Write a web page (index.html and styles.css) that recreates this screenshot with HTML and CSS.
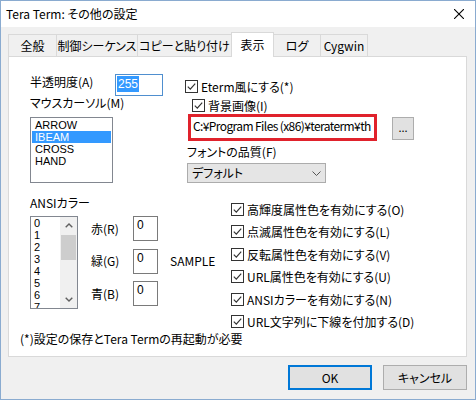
FILE: index.html
```html
<!DOCTYPE html>
<html lang="ja">
<head>
<meta charset="utf-8">
<title>Tera Term: その他の設定</title>
<link rel="stylesheet" href="styles.css">
</head>
<body>
<div class="window">
  <div class="titlebar">
    <span class="title">Tera Term: その他の設定</span>
    <svg class="close" width="10" height="10" viewBox="0 0 10 10"><path d="M0 0L10 10M10 0L0 10" stroke="#000" stroke-width="1.1" fill="none"/></svg>
  </div>
  <div class="body">
    <div class="tabs">
      <div class="tab t1">全般</div>
      <div class="tab t2">制御シーケンス</div>
      <div class="tab t3">コピーと貼り付け</div>
      <div class="tab t4 active">表示</div>
      <div class="tab t5">ログ</div>
      <div class="tab t6">Cygwin</div>
    </div>
    <div class="panel">
      <div class="sec-top">
        <div class="col-left">
          <div class="row-alpha">
            <span class="lbl-alpha">半透明度(A)</span>
            <div class="edit edit-alpha"><span class="sel">255</span></div>
          </div>
          <div class="lbl">マウスカーソル(M)</div>
          <div class="listbox cursor-list">
            <div class="item">ARROW</div>
            <div class="item selected">IBEAM</div>
            <div class="item">CROSS</div>
            <div class="item">HAND</div>
          </div>
        </div>
        <div class="col-right">
          <div class="check eterm">
            <svg class="cb" width="13" height="13" viewBox="0 0 13 13"><rect x="0.5" y="0.5" width="12" height="12" fill="#fff" stroke="#333"/><path d="M2.8 6.6L5.3 9.1L10.2 3.6" fill="none" stroke="#333" stroke-width="1.2"/></svg>
            <span>Eterm風にする(*)</span>
          </div>
          <div class="check bgimg">
            <svg class="cb" width="13" height="13" viewBox="0 0 13 13"><rect x="0.5" y="0.5" width="12" height="12" fill="#fff" stroke="#333"/><path d="M2.8 6.6L5.3 9.1L10.2 3.6" fill="none" stroke="#333" stroke-width="1.2"/></svg>
            <span>背景画像(I)</span>
          </div>
          <div class="path-row">
            <div class="pathbox"><span class="pathtext">C:¥Program Files (x86)¥teraterm¥th</span></div>
            <div class="btn-dots">...</div>
          </div>
          <div class="lbl font-lbl">フォントの品質(F)</div>
          <div class="combo">
            <span>デフォルト</span>
            <svg width="9" height="5" viewBox="0 0 9 5"><path d="M0.5 0.5L4.5 4.5L8.5 0.5" fill="none" stroke="#555" stroke-width="1"/></svg>
          </div>
        </div>
      </div>
      <div class="sec-bottom">
        <div class="ansi">
          <div class="lbl">ANSIカラー</div>
          <div class="listbox ansi-list">
            <div class="nums">
              <div>0</div><div>1</div><div>2</div><div>3</div><div>4</div><div>5</div><div>6</div><div class="last">7</div>
            </div>
            <div class="vscroll">
              <div class="arrow">
                <svg width="8" height="5" viewBox="0 0 8 5"><path d="M0.7 4.3L4 1L7.3 4.3" fill="none" stroke="#606060" stroke-width="1.4"/></svg>
              </div>
              <div class="thumb"></div>
              <div class="track"></div>
              <div class="arrow">
                <svg width="8" height="5" viewBox="0 0 8 5"><path d="M0.7 0.7L4 4L7.3 0.7" fill="none" stroke="#606060" stroke-width="1.4"/></svg>
              </div>
            </div>
          </div>
        </div>
        <div class="rgb">
          <div class="rgb-row"><span class="rgb-lbl">赤(R)</span><div class="edit edit-num">0</div></div>
          <div class="rgb-row"><span class="rgb-lbl">緑(G)</span><div class="edit edit-num">0</div><span class="sample">SAMPLE</span></div>
          <div class="rgb-row"><span class="rgb-lbl">青(B)</span><div class="edit edit-num">0</div></div>
        </div>
        <div class="checks">
          <div class="check crow">
            <svg class="cb" width="13" height="13" viewBox="0 0 13 13"><rect x="0.5" y="0.5" width="12" height="12" fill="#fff" stroke="#333"/><path d="M2.8 6.6L5.3 9.1L10.2 3.6" fill="none" stroke="#333" stroke-width="1.2"/></svg>
            <span>高輝度属性色を有効にする(O)</span>
          </div>
          <div class="check crow">
            <svg class="cb" width="13" height="13" viewBox="0 0 13 13"><rect x="0.5" y="0.5" width="12" height="12" fill="#fff" stroke="#333"/><path d="M2.8 6.6L5.3 9.1L10.2 3.6" fill="none" stroke="#333" stroke-width="1.2"/></svg>
            <span>点滅属性色を有効にする(L)</span>
          </div>
          <div class="check crow">
            <svg class="cb" width="13" height="13" viewBox="0 0 13 13"><rect x="0.5" y="0.5" width="12" height="12" fill="#fff" stroke="#333"/><path d="M2.8 6.6L5.3 9.1L10.2 3.6" fill="none" stroke="#333" stroke-width="1.2"/></svg>
            <span>反転属性色を有効にする(V)</span>
          </div>
          <div class="check crow">
            <svg class="cb" width="13" height="13" viewBox="0 0 13 13"><rect x="0.5" y="0.5" width="12" height="12" fill="#fff" stroke="#333"/><path d="M2.8 6.6L5.3 9.1L10.2 3.6" fill="none" stroke="#333" stroke-width="1.2"/></svg>
            <span>URL属性色を有効にする(U)</span>
          </div>
          <div class="check crow">
            <svg class="cb" width="13" height="13" viewBox="0 0 13 13"><rect x="0.5" y="0.5" width="12" height="12" fill="#fff" stroke="#333"/><path d="M2.8 6.6L5.3 9.1L10.2 3.6" fill="none" stroke="#333" stroke-width="1.2"/></svg>
            <span>ANSIカラーを有効にする(N)</span>
          </div>
          <div class="check crow">
            <svg class="cb" width="13" height="13" viewBox="0 0 13 13"><rect x="0.5" y="0.5" width="12" height="12" fill="#fff" stroke="#333"/><path d="M2.8 6.6L5.3 9.1L10.2 3.6" fill="none" stroke="#333" stroke-width="1.2"/></svg>
            <span>URL文字列に下線を付加する(D)</span>
          </div>
        </div>
      </div>
      <div class="note">(*)設定の保存とTera Termの再起動が必要</div>
    </div>
    <div class="buttons">
      <div class="btn default">OK</div>
      <div class="btn">キャンセル</div>
    </div>
  </div>
</div>
</body>
</html>
```

FILE: styles.css
```css
html, body {
  margin: 0;
  padding: 0;
  background: #ffffff;
}
body {
  font-family: "Noto Sans CJK JP", "Noto Sans", sans-serif;
  font-size: 12px;
  color: #000;
  font-feature-settings: "palt";
}
.window {
  width: 476px;
  height: 400px;
  box-sizing: border-box;
  border: 1px solid #8aabd0;
  background: #f0f0f0;
  display: flex;
  flex-direction: column;
  overflow: hidden;
}
.titlebar {
  height: 26px;
  flex: none;
  background: #fff;
  display: flex;
  align-items: center;
  justify-content: space-between;
  padding: 0 11px 0 5px;
}
.title {
  line-height: 16px;
  font-size: 12px;
}
.body {
  flex: 1;
  display: flex;
  flex-direction: column;
}
.tabs {
  display: flex;
  align-items: flex-end;
  height: 22px;
  margin: 7px 0 0 7px;
}
.tab {
  height: 22px;
  box-sizing: border-box;
  border: 1px solid #d9d9d9;
  border-bottom: none;
  margin-right: -1px;
  display: flex;
  align-items: center;
  justify-content: center;
  line-height: 14px;
  white-space: nowrap;
}
.t1 { width: 49px; }
.t2 { width: 82px; }
.t3 { width: 95px; }
.t4 { width: 43px; }
.t5 { width: 48px; }
.t6 { width: 48px; }
.tab.active {
  height: 25px;
  margin-bottom: -1px;
  background: #fff;
  position: relative;
  z-index: 1;
  padding-bottom: 1px;
}
.panel {
  margin-left: 7px;
  width: 459px;
  height: 301px;
  box-sizing: border-box;
  border: 1px solid #d9d9d9;
  background: #fff;
}
.sec-top {
  display: flex;
  height: 133px;
}
.col-left {
  margin-left: 21px;
  width: 155px;
  flex: none;
}
.row-alpha {
  display: flex;
  margin-top: 17px;
  height: 22px;
}
.lbl-alpha {
  width: 85px;
  line-height: 16px;
}
.edit {
  box-sizing: border-box;
  background: #fff;
  font-family: "Liberation Sans", sans-serif;
  font-size: 12px;
}
.edit-alpha {
  width: 48px;
  height: 22px;
  border: 1px solid #4f8fcf;
  padding: 1px 0 0 1px;
}
.sel {
  display: inline-block;
  background: #3399ff;
  color: #fff;
  line-height: 16px;
  padding: 0 1px;
}
.lbl {
  line-height: 14px;
  white-space: nowrap;
}
.listbox {
  box-sizing: border-box;
  border: 1px solid #828790;
  background: #fff;
}
.cursor-list {
  margin-top: 7px;
  width: 83px;
  height: 66px;
  padding: 1px;
  font-family: "Liberation Sans", sans-serif;
  font-size: 11px;
}
.item {
  line-height: 12px;
  padding-left: 3px;
}
.item.selected {
  background: #3399ff;
  color: #fff;
}
.col-right {
  flex: none;
}
.check {
  display: flex;
  align-items: center;
  gap: 3px;
  white-space: nowrap;
}
.cb {
  flex: none;
}
.eterm {
  margin-top: 21px;
  height: 16px;
}
.bgimg {
  margin-top: 3px;
  margin-left: 7px;
  height: 16px;
}
.path-row {
  display: flex;
  margin-top: 1px;
  margin-left: 3px;
}
.pathbox {
  width: 189px;
  height: 27px;
  box-sizing: border-box;
  border: 3px solid #e0222c;
  padding-left: 2px;
  line-height: 17px;
  white-space: nowrap;
  overflow: hidden;
}
.pathtext {
  letter-spacing: -0.6px;
}
.btn-dots {
  margin-left: 15px;
  margin-top: 3px;
  width: 22px;
  height: 23px;
  box-sizing: border-box;
  border: 1px solid #adadad;
  background: #e1e1e1;
  text-align: center;
  line-height: 19px;
  font-size: 11px;
}
.font-lbl {
  margin-top: 4px;
  margin-left: 2px;
}
.combo {
  margin-top: 4px;
  margin-left: 2px;
  width: 139px;
  height: 20px;
  box-sizing: border-box;
  border: 1px solid #acacac;
  background: #e5e5e5;
  display: flex;
  align-items: center;
  justify-content: space-between;
  padding: 0 4px;
  line-height: 16px;
}
.sec-bottom {
  display: flex;
  height: 142px;
}
.ansi {
  margin-left: 21px;
  width: 61px;
  flex: none;
}
.ansi .lbl {
  margin-top: 6px;
}
.ansi-list {
  margin-top: 6px;
  width: 48px;
  height: 93px;
  display: flex;
  overflow: hidden;
}
.nums {
  flex: 1;
  padding-left: 3px;
  font-family: "Liberation Sans", sans-serif;
  font-size: 11px;
  line-height: 12px;
  height: 91px;
  overflow: hidden;
}
.nums .last {
  height: 7px;
  overflow: hidden;
}
.vscroll {
  width: 17px;
  flex: none;
  background: #f0f0f0;
  display: flex;
  flex-direction: column;
}
.arrow {
  height: 17px;
  display: flex;
  align-items: center;
  justify-content: center;
  flex: none;
}
.thumb {
  height: 25px;
  margin: 1px 1px 0;
  background: #cdcdcd;
  flex: none;
}
.track {
  flex: 1;
}
.rgb {
  width: 140px;
  flex: none;
  margin-top: 26px;
  display: flex;
  flex-direction: column;
  gap: 7.5px;
}
.rgb-row {
  display: flex;
  align-items: center;
  height: 25px;
}
.rgb-lbl {
  width: 42px;
  line-height: 16px;
}
.edit-num {
  width: 25px;
  height: 25px;
  border: 1px solid #7a7a7a;
  padding: 1px 3px 0;
  line-height: 14px;
}
.sample {
  margin-left: 12px;
  line-height: 16px;
}
.checks {
  margin-top: 7.75px;
}
.crow {
  height: 22.5px;
}
.note {
  margin-left: 11px;
  line-height: 14px;
  white-space: nowrap;
}
.buttons {
  display: flex;
  justify-content: flex-end;
  gap: 11px;
  margin-top: 8px;
  padding-right: 8px;
}
.btn {
  width: 84px;
  height: 25px;
  box-sizing: border-box;
  border: 1px solid #adadad;
  background: #e1e1e1;
  display: flex;
  align-items: center;
  justify-content: center;
  line-height: 16px;
}
.btn.default {
  border: 2px solid #0078d7;
}
```
